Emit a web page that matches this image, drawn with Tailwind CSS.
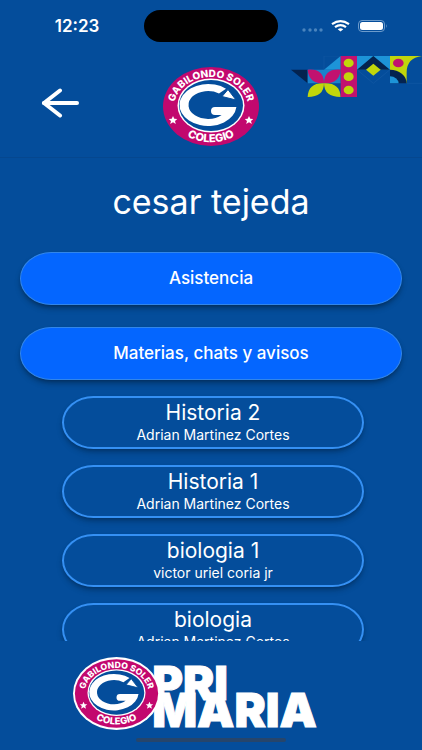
<!DOCTYPE html>
<html lang="es">
<head>
  <meta charset="UTF-8">
  <meta name="viewport" content="width=device-width, initial-scale=1.0">
  <title>Colegio Gabilondo Soler</title>
  <script src="https://cdn.jsdelivr.net/npm/@tailwindcss/browser@4"></script>
</head>
<body class="bg-[#044d9b] text-white font-['Inter',sans-serif]">
  <!-- Logo compartido por el encabezado y el pie -->
  <svg class="hidden" xmlns="http://www.w3.org/2000/svg">
    <symbol id="logo" viewBox="0 0 98 81">
      <ellipse cx="49" cy="40.500" rx="48" ry="39.500" fill="#c2086e"></ellipse>
      <ellipse cx="49" cy="39.500" rx="33.500" ry="27" fill="#fff"></ellipse>
      <ellipse cx="49" cy="39.500" rx="32" ry="25.500" fill="#044d9b"></ellipse>
      <path d="M64 22.700A28.500 21 0 1 0 74.400 41H53A4 4 0 0 0 53 49H59.600A19.500 14 0 1 1 57 27.400Z" fill="#fff"></path>
      <path d="M66 23.500L74 34L60 30.500Z" fill="#fff" stroke="#044d9b"></path>
      <path id="arcTop" d="M13 48A37 30 0 1 1 85 48" fill="none"></path>
      <path id="arcBottom" d="M7 48A43 36 0 0 0 91 48" fill="none"></path>
      <g fill="#fff" font-family="Inter, sans-serif" font-weight="800" text-anchor="middle">
        <text font-size="10"><textPath href="#arcTop" startOffset="50%">GABILONDO SOLER</textPath></text>
        <text font-size="11"><textPath href="#arcBottom" startOffset="50%">COLEGIO</textPath></text>
      </g>
      <path id="star" d="M11 50L12.300 52.800L15.300 53L13 55L13.800 58L11 56.300L8.200 58L9 55L6.700 53L9.700 52.800Z" fill="#fff"></path>
      <use href="#star" x="76"></use>
    </symbol>
  </svg>

  <div class="h-screen flex flex-col overflow-hidden">
    <header class="relative shrink-0 border-b border-[#05478f]">
      <!-- Barra de estado -->
      <div class="h-[52px] grid grid-cols-[1fr_134px_1fr] items-center">
        <div class="pl-[10px] text-center text-[17px] leading-5 font-semibold">12:23</div>
        <div class="h-8 rounded-full bg-black"></div>
        <div class="flex items-center pl-6">
          <svg class="mt-2" width="22" height="4" viewBox="0 0 22 4" fill="#4a84be">
            <circle cx="2" cy="2" r="1.700"></circle>
            <circle cx="8" cy="2" r="1.700"></circle>
            <circle cx="13.500" cy="2" r="1.700"></circle>
            <circle cx="19" cy="2" r="1.700"></circle>
          </svg>
          <svg class="ml-[7px]" width="19" height="12" viewBox="0 0 19 12" fill="none" stroke="#fff" stroke-width="2.200">
            <path d="M1 4.200Q9.500 -1.800 18 4.200"></path>
            <path d="M4 7.200Q9.500 3 15 7.200"></path>
            <path d="M9.500 11.500L6.700 9.200Q9.500 7.400 12.300 9.200Z" fill="#fff" stroke="none"></path>
          </svg>
          <svg class="ml-2" width="30" height="12" viewBox="0 0 30 12">
            <rect x=".5" y=".5" width="26" height="11" rx="3.500" fill="none" stroke="#6c9bcb"></rect>
            <rect x="2" y="2" width="23" height="8" rx="2.500" fill="#fff"></rect>
            <path d="M28 4Q29.500 6 28 8Z" fill="#6c9bcb"></path>
          </svg>
        </div>
      </div>
      <div class="h-[105px] grid grid-cols-[1fr_98px_1fr] items-center">
        <button type="button" aria-label="Regresar" class="justify-self-start ml-[41px] mb-1">
          <svg width="39" height="30" viewBox="0 0 39 30" fill="none" stroke="#fff" stroke-width="4" stroke-linecap="round" stroke-linejoin="round">
            <path d="M3 15H36"></path>
            <path d="M19 2.500L3 15L19 27.500"></path>
          </svg>
        </button>
        <svg class="w-[98px] h-[81px] mt-1" role="img" aria-label="Colegio Gabilondo Soler"><use href="#logo"></use></svg>
      </div>
      <!-- Mosaico decorativo -->
      <svg class="absolute right-0 top-14" width="131" height="41" viewBox="18 18 393 123">
        <path d="M117 59V18H167M216 59L265 100L315 59M365 100H411" fill="none" stroke="#1459a5" stroke-width="2"></path>
        <path d="M18 59H68V100Z" fill="#04234f"></path>
        <path d="M117 59L167 18V59Z" fill="#1d94d8"></path>
        <path d="M68 59H167V100H68Z" fill="#1a83cb"></path>
        <path d="M68 59Q117 55 117 100Q72 102 68 59ZM167 59Q117 55 117 100Q163 102 167 59Z" fill="#c2126f"></path>
        <path d="M68 141Q70 98 117 100Q117 141 68 141ZM167 141Q165 98 117 100Q117 141 167 141Z" fill="#c1d60b"></path>
        <path d="M167 18H216V141H167Z" fill="#c2126f"></path>
        <path d="M216 18H315V59H216Z" fill="#1d94d8"></path>
        <path d="M216 59L265 18L315 59Z" fill="#04234f"></path>
        <path d="M265 41L287 59L265 77L243 59Z" fill="#c1d60b"></path>
        <path d="M315 18H411Q365 24 365 67V100L315 59Z" fill="#c1d60b"></path>
        <path d="M315 59A50 41 0 0 1 365 100H315Z" fill="#04234f"></path>
        <path d="M315 79A26 21 0 0 1 341 100H315Z" fill="#1d94d8"></path>
        <g fill="#c1d60b">
          <ellipse cx="191" cy="39" rx="15" ry="13"></ellipse>
          <ellipse cx="191" cy="80" rx="15" ry="13"></ellipse>
          <ellipse cx="191" cy="120" rx="15" ry="13"></ellipse>
        </g>
        <ellipse cx="340" cy="39" rx="16" ry="13" fill="#c2126f"></ellipse>
      </svg>
    </header>

    <main class="flex-1 min-h-0 flex flex-col px-5">
      <h1 class="pt-6 pb-[30px] text-center text-[34px] leading-10">cesar tejeda</h1>
      <div class="flex flex-col gap-[22px]">
        <button type="button" class="h-[53px] rounded-[32px/27px] border border-[#3286ea] bg-[#0466ff] text-[17px] font-medium shadow-md shadow-black/30">Asistencia</button>
        <button type="button" class="h-[53px] rounded-[32px/27px] border border-[#3286ea] bg-[#0466ff] text-[17px] font-medium shadow-md shadow-black/30">Materias, chats y avisos</button>
      </div>
      <ul class="flex-1 min-h-0 overflow-y-auto [scrollbar-width:none] flex flex-col gap-4 pt-4 pl-[42px] pr-[38px]">
        <li>
          <button type="button" class="w-full h-[53px] flex flex-col items-center justify-center rounded-[32px/27px] border-2 border-[#3590f3] bg-[#044d9b] shadow-md shadow-black/25">
            <span class="text-[21px] leading-6">Historia 2</span>
            <span class="text-[14px] leading-5">Adrian Martinez Cortes</span>
          </button>
        </li>
        <li>
          <button type="button" class="w-full h-[53px] flex flex-col items-center justify-center rounded-[32px/27px] border-2 border-[#3590f3] bg-[#044d9b] shadow-md shadow-black/25">
            <span class="text-[21px] leading-6">Historia 1</span>
            <span class="text-[14px] leading-5">Adrian Martinez Cortes</span>
          </button>
        </li>
        <li>
          <button type="button" class="w-full h-[53px] flex flex-col items-center justify-center rounded-[32px/27px] border-2 border-[#3590f3] bg-[#044d9b] shadow-md shadow-black/25">
            <span class="text-[21px] leading-6">biologia 1</span>
            <span class="text-[14px] leading-5">victor uriel coria jr</span>
          </button>
        </li>
        <li>
          <button type="button" class="w-full h-[53px] flex flex-col items-center justify-center rounded-[32px/27px] border-2 border-[#3590f3] bg-[#044d9b] shadow-md shadow-black/25">
            <span class="text-[21px] leading-6">biologia</span>
            <span class="text-[14px] leading-5">Adrian Martinez Cortes</span>
          </button>
        </li>
      </ul>
    </main>

    <footer class="relative shrink-0 h-[109px] pt-4 pr-8 flex justify-center items-start">
      <div class="relative z-10 w-[87px] h-[73px] -mr-2 rounded-[50%] bg-white p-px">
        <svg class="w-full h-full" role="img" aria-label="Colegio Gabilondo Soler"><use href="#logo"></use></svg>
      </div>
      <div class="pt-3 text-[47px] leading-[27px] font-black [-webkit-text-stroke:1px_white]">
        <div>PRI</div>
        <div>MARIA</div>
      </div>
      <div class="absolute bottom-2 inset-x-0 mx-auto w-[150px] h-1 rounded-full bg-[#26456b]"></div>
    </footer>
  </div>
</body>
</html>
